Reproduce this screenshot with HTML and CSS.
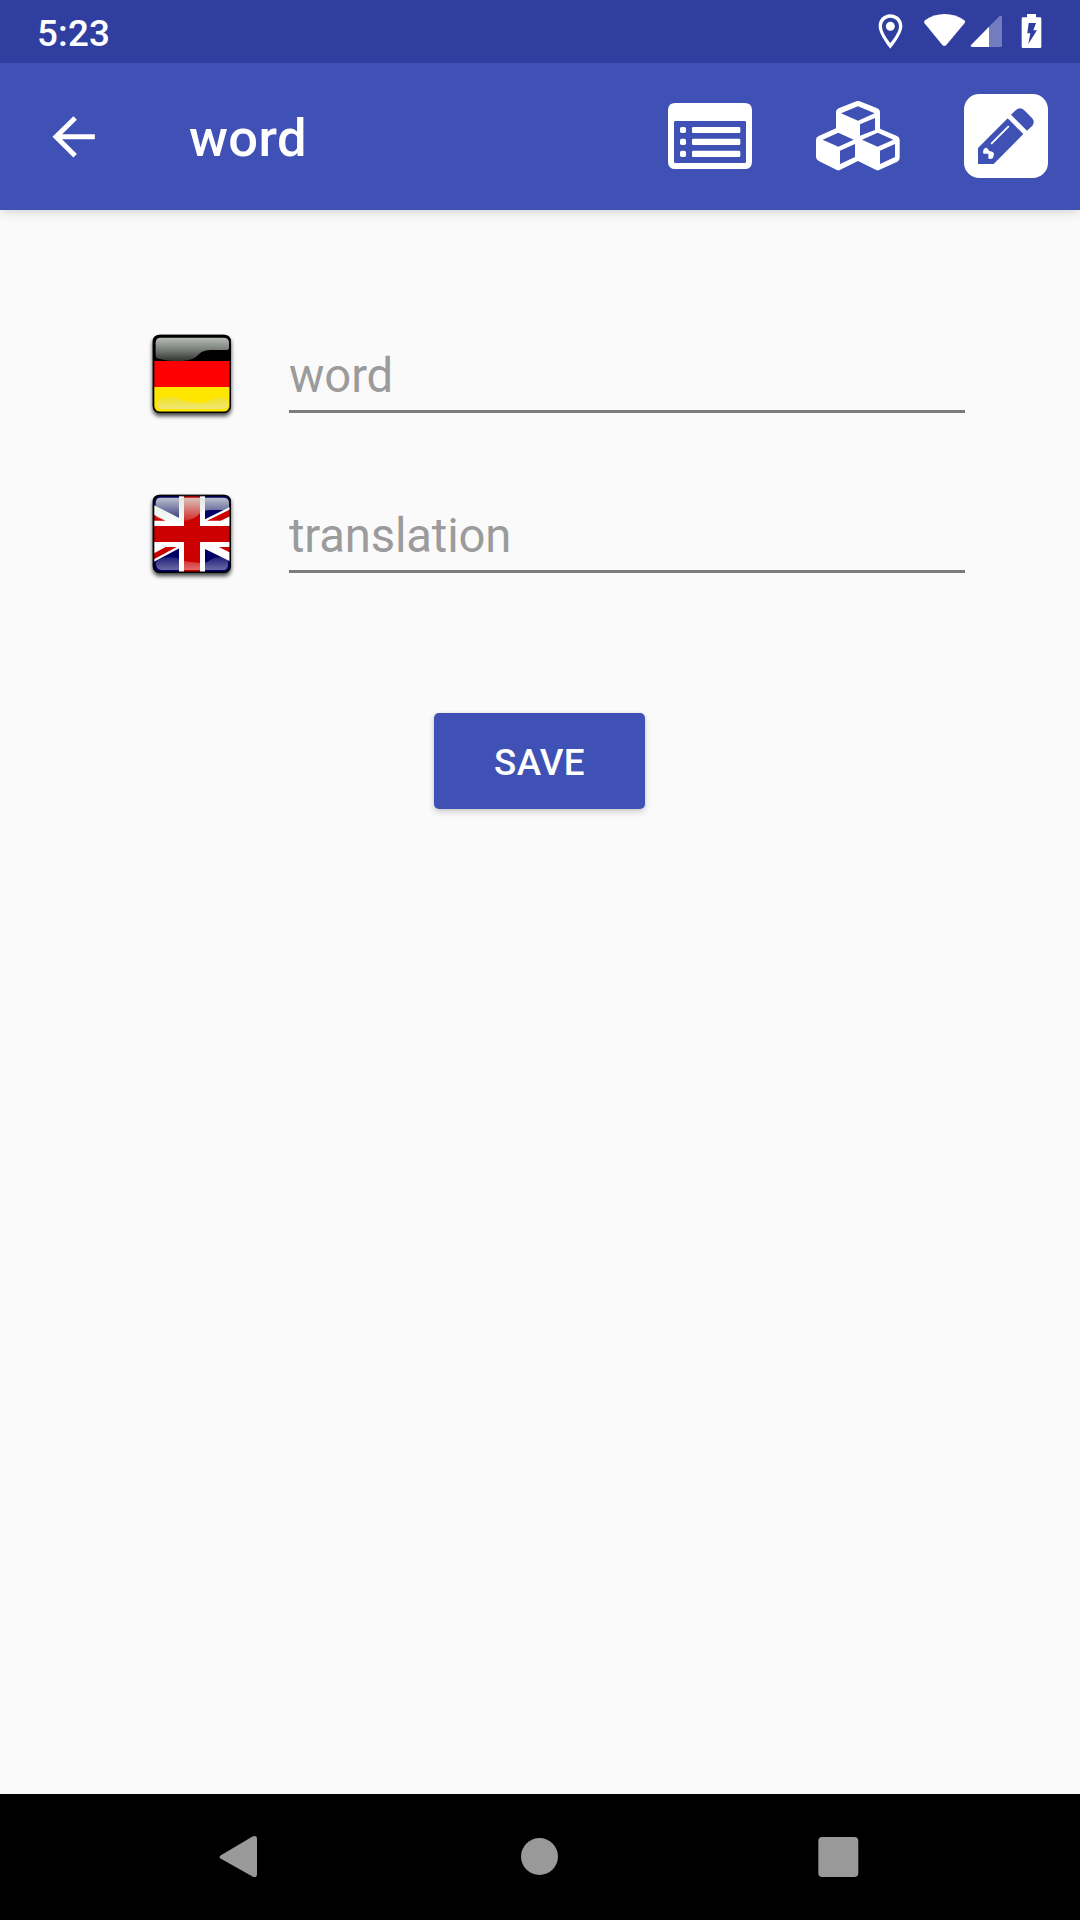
FILE: index.html
```html
<!DOCTYPE html>
<html lang="en">
<head>
<meta charset="utf-8">
<title>word</title>
<link rel="stylesheet" href="styles.css">
</head>
<body>
<div class="screen">
  <div class="status-bar">
    <span class="clock">5:23</span>
    <div class="status-icons">
      <svg class="status-pin" width="27" height="36" viewBox="51 42 81 108" fill="#fff"><path fill-rule="evenodd" d="M91 43C71 43 56 58 56 78C56 104 91 146 91 146S127 104 127 78C127 58 111 43 91 43ZM91 53C106 53 117 64 117 79C117 96 102 116 91 129C80 116 66 96 66 79C66 64 77 53 91 53Z"/><circle cx="91" cy="79" r="13.500"/></svg>
      <svg class="status-wifi" width="42" height="36" viewBox="192 42 126 108" fill="#fff"><path d="M195 61C229 36 279 36 313 61Q317 65 314 69L259 135Q253 141 247 135L193 69Q191 64 195 61Z"/></svg>
      <svg class="status-signal" width="34" height="36" viewBox="330 42 102 108" fill="#fff"><path fill-opacity=".32" d="M387 80L418 49Q426 44 426 53V137Q426 141 422 141H387Z"/><path d="M387 80V141H336Q329 140 334 134Z"/></svg>
      <svg class="status-battery" width="24" height="36" viewBox="480 42 72 108"><path fill="#fff" d="M501 42H528V52H540Q544 52 544 56V140Q544 144 540 144H489Q485 144 485 140V56Q485 52 489 52H501Z"/><path fill="#303f9f" d="M506 69H528L520 91H531L505 132L511 100H502Z"/></svg>
    </div>
  </div>

  <header class="app-bar">
    <svg class="back" width="44" height="44" viewBox="156 344 132 132"><path fill="none" stroke="#fff" stroke-width="15" d="M284.500 409.500H168M225.500 353L168 409.500L225.500 466"/></svg>
    <h1 class="title">word</h1>
    <nav class="actions">
      <svg width="84" height="84" viewBox="54 42 252 252"><path fill="#fff" fill-rule="evenodd" d="M76 69H284Q306 69 306 91V245Q306 267 284 267H76Q54 267 54 245V91Q54 69 76 69ZM76 123Q72 123 72 127V245Q72 249 76 249H284Q288 249 288 245V127Q288 123 284 123Z"/><g fill="#fff"><rect x="90" y="141" width="18" height="18" rx="5"/><rect x="90" y="176" width="18" height="19" rx="5"/><rect x="90" y="212" width="18" height="19" rx="5"/><rect x="126" y="141" width="145" height="18" rx="4"/><rect x="126" y="176" width="145" height="19" rx="4"/><rect x="126" y="212" width="145" height="19" rx="4"/></g></svg>
      <svg width="84" height="84" viewBox="48 42 252 252"><path fill="#fff" d="M169 64Q174 62 179 64L232 85Q240 89 240 96V146L291 168Q299 172 299 179V233Q299 241 292 245L239 269Q233 272 227 269L174 243L121 269Q115 272 109 269L56 243Q48 239 48 231V179Q48 172 56 168L108 145V96Q108 89 116 85Z"/><g fill="#3f51b5"><path d="M174 79L224 100L174 122L123 100Z"/><path d="M180 133L225 114V150L180 167Z"/><path d="M115 158L161 179L115 200L68 179Z"/><path d="M120 212L165 192V231L120 252Z"/><path d="M233 158L280 179L233 200L186 179Z"/><path d="M240 212L285 192V231L240 252Z"/></g></svg>
      <svg width="84" height="84" viewBox="42 42 252 252"><rect x="42" y="42" width="252" height="252" rx="46" fill="#fff"/><g fill="#3f51b5"><path d="M84 204L173 115L220 162L131 252H84Z"/><path d="M183 104L198 90Q210 80 222 90L246 114Q256 125 247 137L231 152Z"/></g><path stroke="#fff" stroke-width="5.500" stroke-linecap="round" d="M125 190L175 140"/><path fill="#fff" d="M106 204Q110 202 113 206L118 213L127 215Q133 218 132 223L129 234Q119 239 115 235V221H101Q97 217 101 208Z"/></svg>
    </nav>
  </header>

  <main class="content">
    <form class="form">
      <div class="row">
        <svg class="flag" width="88" height="92" viewBox="24 30 264 276">
          <defs>
            <linearGradient id="shineDark" x1="0" y1="0" x2="0" y2="1"><stop offset="0" stop-color="#b6beb6"/><stop offset=".5" stop-color="#7a807a"/><stop offset="1" stop-color="#303330"/></linearGradient>
            <linearGradient id="shineGold" x1="0" y1="0" x2="0" y2="1"><stop offset="0" stop-color="#e8e050" stop-opacity=".5"/><stop offset="1" stop-color="#eee67c"/></linearGradient>
            <clipPath id="tile"><rect x="42" y="47" width="228" height="229" rx="17"/></clipPath>
            <filter id="drop" x="-20%" y="-20%" width="140%" height="140%"><feGaussianBlur stdDeviation="6.500"/></filter>
          </defs>
          <rect x="38" y="53" width="235" height="235" rx="20" opacity=".75" filter="url(#drop)"/>
          <rect x="38" y="44" width="235" height="235" rx="20"/>
          <g clip-path="url(#tile)"><path fill="#f00" d="M42 123H270V201H42Z"/><path fill="#ffe600" d="M42 201H270V276H42Z"/>
            <path fill="url(#shineDark)" d="M62 53H250Q267 53 267 68V84Q267 90 260 90H214C183 91 180 101 168 111C143 129 80 125 50 114Q47 113 47 106V68Q47 53 62 53Z"/>
            <path fill="url(#shineGold)" d="M51 250C52 234 75 230 99 232C126 235 133 247 159 247C187 250 199 250 212 239C232 228 260 229 264 241V254Q264 267 248 267H65Q50 267 51 250Z"/>
          </g>
          <rect x="41" y="47" width="229" height="229" rx="18" fill="none" stroke="#000" stroke-opacity=".65" stroke-width="5"/>
        </svg>
        <input class="field" type="text" placeholder="word">
      </div>
      <div class="row">
        <svg class="flag" width="88" height="92" viewBox="24 30 264 276">
          <defs>
            <linearGradient id="shineTop" x1="0" y1="0" x2="0" y2="1"><stop offset="0" stop-color="#dfe6df" stop-opacity=".85"/><stop offset="1" stop-color="#dfe6df" stop-opacity=".18"/></linearGradient>
            <linearGradient id="shineBottom" x1="0" y1="0" x2="0" y2="1"><stop offset="0" stop-color="#fff" stop-opacity=".12"/><stop offset="1" stop-color="#fff" stop-opacity=".42"/></linearGradient>
          </defs>
          <rect x="38" y="53" width="235" height="235" rx="20" opacity=".75" filter="url(#drop)"/>
          <rect x="38" y="44" width="235" height="235" rx="20"/>
          <g clip-path="url(#tile)">
            <path fill="#000066" d="M41 46H271V277H41Z"/>
            <path fill="#fff" d="M41 75L118 114V138H41ZM195 118L271 80V138H195ZM41 246L118 205V186H41ZM195 207L271 244V186H195Z"/>
            <path fill="#c00" d="M41 104L76 122H41ZM201 122L271 88V108L242 122ZM41 220L77 201H110L41 238ZM236 201H271V218Z"/>
            <path fill="#fff" d="M117 46H195V123H271V201H195V277H117V201H41V123H117Z"/>
            <path fill="#c00" d="M132 46H180V138H271V186H180V277H132V186H41V138H132Z"/>
            <path fill="url(#shineTop)" d="M62 53H250Q267 53 267 68V84Q267 90 260 90H214C183 91 180 101 168 111C143 129 80 125 50 114Q47 113 47 106V68Q47 53 62 53Z"/>
            <path fill="url(#shineBottom)" d="M48 250C49 236 75 230 99 232C126 235 133 247 159 247C187 250 199 250 212 239C232 228 260 229 264 241V254Q264 270 248 270H65Q48 270 48 250Z"/>
          </g>
          <rect x="41" y="47" width="229" height="229" rx="18" fill="none" stroke="#000" stroke-opacity=".65" stroke-width="5"/>
        </svg>
        <input class="field" type="text" placeholder="translation">
      </div>
      <button class="save" type="button">SAVE</button>
    </form>
  </main>

  <div class="nav-bar">
    <svg width="44" height="44" viewBox="0 0 44 44" fill="#999"><path d="M5.500 20.500L37.500 1.500Q42 -.5 42 4V39Q42 43.500 37.500 41.500L5.500 23.500Q3.500 22 5.500 20.500Z"/></svg>
    <svg width="44" height="44" viewBox="0 0 44 44" fill="#999"><circle cx="23.500" cy="21.500" r="18.500"/></svg>
    <svg width="44" height="44" viewBox="0 0 44 44" fill="#999"><rect x="1.300" y="2" width="40" height="40" rx="4"/></svg>
  </div>
</div>
</body>
</html>
```
FILE: styles.css
```css
* {
  box-sizing: border-box;
}

body {
  margin: 0;
  font-family: Roboto, "Liberation Sans", sans-serif;
}

svg {
  display: block;
  flex: none;
}

.screen {
  display: flex;
  flex-direction: column;
  width: 1080px;
  height: 1920px;
  overflow: hidden;
  background: #fafafa;
}

.status-bar {
  position: relative;
  z-index: 1;
  display: flex;
  justify-content: space-between;
  height: 63px;
  flex: none;
  padding: 0 36px 0 37px;
  background: #303f9f;
  color: #fff;
}

.clock {
  font-size: 36.75px;
  font-weight: 500;
  line-height: 67px;
  letter-spacing: 0.2px;
}

.status-icons {
  display: flex;
  padding-top: 14px;
}

.status-wifi {
  margin-left: 20px;
}

.status-signal {
  margin-left: 4px;
}

.status-battery {
  margin-left: 16px;
}

.app-bar {
  display: flex;
  align-items: center;
  height: 147px;
  flex: none;
  padding: 0 32px 0 52px;
  background: #3f51b5;
  color: #fff;
  box-shadow: 0 2px 10px rgba(0, 0, 0, 0.16);
}

.title {
  margin: 3px 0 0 93px;
  font-size: 52.5px;
  font-weight: 500;
  line-height: 62px;
  letter-spacing: 0.4px;
}

.actions {
  display: flex;
  gap: 64px;
  margin: 0 0 2px auto;
}

.content {
  flex: 1;
  padding: 120px 115px 0 148px;
}

.form {
  display: flex;
  flex-direction: column;
}

.row {
  display: flex;
  height: 92px;
  margin-bottom: 68px;
}

.field {
  width: 676px;
  height: 83px;
  margin-left: 53px;
  padding: 11px 0 0;
  border: 0;
  border-bottom: 3px solid #7b7b7b;
  border-radius: 0;
  outline: 0;
  background: none;
  font: 400 47.25px/56px Roboto, "Liberation Sans", sans-serif;
  letter-spacing: -0.15px;
  color: #212121;
}

.field::placeholder {
  color: #9b9b9b;
  opacity: 1;
}

.save {
  width: 211px;
  height: 96px;
  margin: 63px 0 0 286px;
  padding: 4px 0 0;
  border: 0;
  border-radius: 5px;
  background: #3f51b5;
  color: #fff;
  font: 500 36.75px/44px Roboto, "Liberation Sans", sans-serif;
  letter-spacing: 0.3px;
  box-shadow: 0 3px 6px rgba(0, 0, 0, 0.18), 0 0 3px rgba(0, 0, 0, 0.08);
}

.nav-bar {
  display: flex;
  align-items: center;
  gap: 257px;
  height: 126px;
  flex: none;
  padding-left: 215px;
  background: #000;
}
```
